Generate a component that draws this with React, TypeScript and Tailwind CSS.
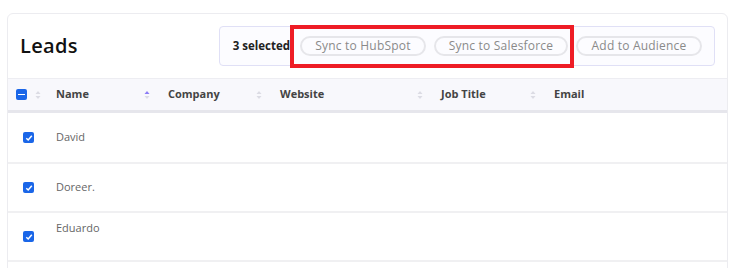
import React from "react";

const font = { fontFamily: '"Open Sans", "Liberation Sans", sans-serif' };

function SortIcon({ active = false }: { active?: boolean }) {
  return (
    <svg width="6" height="10" viewBox="0 0 6 10" className="shrink-0">
      <path d="M3 1 L5.5 4 L0.5 4 Z" fill={active ? "#8b7cf6" : "#dcdce4"} />
      <path d="M3 9 L5.5 6 L0.5 6 Z" fill="#dcdce4" />
    </svg>
  );
}

function Check() {
  return (
    <div className="w-[11px] h-[11px] rounded-[2px] bg-[#1a66e8] flex items-center justify-center">
      <svg width="8" height="8" viewBox="0 0 8 8">
        <path d="M1.3 4.2 L3.2 6 L6.8 1.8" stroke="white" strokeWidth="1.5" fill="none" />
      </svg>
    </div>
  );
}

export default function App() {
  const cols = [
    { label: "Name", w: "w-[112px]", active: true },
    { label: "Company", w: "w-[112px]" },
    { label: "Website", w: "w-[161px]" },
    { label: "Job Title", w: "w-[113px]" },
    { label: "Email", w: "flex-1", none: true },
  ];
  const rows = [
    { name: "David", h: "h-[51px]", top: false },
    { name: "Doreer.", h: "h-[49px]", top: false },
    { name: "Eduardo", h: "h-[49px]", top: true },
  ];
  return (
    <div className="w-[734px] h-[268px] bg-white overflow-hidden relative" style={font}>
      <div className="ml-[7px] mt-[13px] w-[721px] h-[300px] border border-[#ececf0] rounded-[6px]">
        <div className="flex items-center h-[64px] pl-[12px] pr-[12px]">
          <div className="text-[20px] font-semibold text-[#111] tracking-[0.3px]">Leads</div>
          <div className="ml-auto flex items-center h-[40px] border border-[#e0e0f6] bg-[#fcfcff] rounded-[4px] pl-[13px] pr-[12px] gap-[8px]">
            <span className="text-[11.5px] font-bold text-[#222] mr-[2px]">3 selected</span>
            <button className="h-[20px] w-[126px] rounded-full border-2 border-[#e6e6ea] text-[12px] text-[#8a8a8a] leading-none tracking-[0.2px]">Sync to HubSpot</button>
            <button className="h-[20px] w-[134px] rounded-full border-2 border-[#e6e6ea] text-[12px] text-[#8a8a8a] leading-none tracking-[0.2px]">Sync to Salesforce</button>
            <button className="h-[20px] w-[126px] rounded-full border-2 border-[#e6e6ea] text-[12px] text-[#8a8a8a] leading-none tracking-[0.2px]">Add to Audience</button>
          </div>
        </div>
        <div className="flex items-center h-[35px] bg-[#f8f8fc] border-t border-[#ededf2] border-b-[3px] border-b-[#e6e6ec]">
          <div className="w-[48px] flex items-center pl-[8px] gap-[8px]">
            <div className="w-[11px] h-[11px] rounded-[2px] bg-[#1a66e8] flex items-center justify-center">
              <div className="w-[7px] h-[1.5px] bg-white" />
            </div>
            <SortIcon />
          </div>
          {cols.map((c) => (
            <div key={c.label} className={`${c.w} flex items-center pr-[18px]`}>
              <span className="text-[11px] font-bold text-[#444]">{c.label}</span>
              {!c.none && <div className="ml-auto"><SortIcon active={c.active} /></div>}
            </div>
          ))}
        </div>
        {rows.map((r) => (
          <div key={r.name} className={`flex ${r.h} border-b-2 border-[#f0f0f2]`}>
            <div className="w-[48px] pl-[15px] flex items-center">
              <Check />
            </div>
            <div className={`flex ${r.top ? "items-start pt-[7px]" : "items-center"} text-[11px] text-[#666]`}>{r.name}</div>
          </div>
        ))}
      </div>
      <div className="absolute left-[290px] top-[25px] w-[284px] h-[43px] border-[4px] border-[#ee1c25]" />
    </div>
  );
}
